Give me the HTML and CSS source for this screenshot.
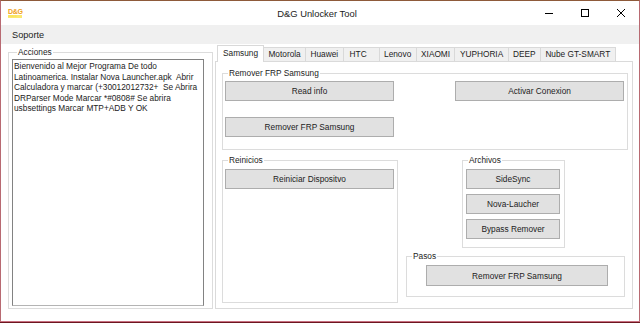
FILE: index.html
```html
<!DOCTYPE html>
<html>
<head>
<meta charset="utf-8" />
<title>D&amp;G Unlocker Tool</title>
<link rel="stylesheet" href="styles.css">
</head>
<body>
<div class="window">
	<div class="titlebar">
		<div class="app-icon"><span class="logo-top">D&amp;G</span><span class="logo-sub">unlock</span></div>
		<div class="title">D&amp;G Unlocker Tool</div>
		<div class="controls">
			<span class="ctl"><svg width="10" height="10" viewBox="0 0 10 10"><path d="M1 5.5H9" stroke="#000" stroke-width="1"/></svg></span>
			<span class="ctl"><svg width="10" height="10" viewBox="0 0 10 10"><rect x="1.5" y="1.5" width="7" height="7" fill="none" stroke="#000" stroke-width="1"/></svg></span>
			<span class="ctl"><svg width="10" height="10" viewBox="0 0 10 10"><path d="M1 1L9 9M9 1L1 9" stroke="#000" stroke-width="1"/></svg></span>
		</div>
	</div>
	<div class="menubar"><span class="menu-item">Soporte</span></div>
	<div class="client">
		<fieldset class="group acciones">
			<legend>Acciones</legend>
			<div class="textbox">Bienvenido al Mejor Programa De todo<br>Latinoamerica. Instalar Nova Launcher.apk&nbsp; Abrir<br>Calculadora y marcar (+30012012732+&nbsp; Se Abrira<br>DRParser Mode Marcar *#0808# Se abrira<br>usbsettings Marcar MTP+ADB Y OK</div>
		</fieldset>
		<div class="tabs">
			<div class="tabstrip">
				<span class="tab active">Samsung</span>
				<span class="tab">Motorola</span>
				<span class="tab">Huawei</span>
				<span class="tab tab-wide">HTC</span>
				<span class="tab">Lenovo</span>
				<span class="tab">XIAOMI</span>
				<span class="tab">YUPHORIA</span>
				<span class="tab">DEEP</span>
				<span class="tab">Nube GT-SMART</span>
			</div>
			<div class="tabpage">
				<fieldset class="group frp">
					<legend>Remover FRP Samsung</legend>
					<div class="frp-body">
						<div class="btn">Read info</div>
						<div class="btn">Activar Conexion</div>
						<div class="btn">Remover FRP Samsung</div>
					</div>
				</fieldset>
				<div class="lower">
					<fieldset class="group reinicios">
						<legend>Reinicios</legend>
						<div class="reinicios-body">
							<div class="btn">Reiniciar Dispositvo</div>
						</div>
					</fieldset>
					<div class="right-col">
						<fieldset class="group archivos">
							<legend>Archivos</legend>
							<div class="archivos-body">
								<div class="btn">SideSync</div>
								<div class="btn">Nova-Laucher</div>
								<div class="btn">Bypass Remover</div>
							</div>
						</fieldset>
						<fieldset class="group pasos">
							<legend>Pasos</legend>
							<div class="pasos-body">
								<div class="btn btn-pasos">Remover FRP Samsung</div>
							</div>
						</fieldset>
					</div>
				</div>
			</div>
		</div>
	</div>
</div>
</body>
</html>
```

FILE: styles.css
```css
body{ margin: 0; background: #6e1620; font-family: "Liberation Sans", Arial, sans-serif; color: #1c1c1c;}
.window{ width: 640px; height: 322px; box-sizing: border-box; background: #fff; border: 1px solid #b86a72; border-top-color: #8e5a3a; border-bottom-color: #c87080;}

/* barra de titulo */
.titlebar{ height: 24px; display: grid; grid-template-columns: 1fr auto 1fr; align-items: center;}
.app-icon{ display: flex; flex-direction: column; margin-left: 7px; width: 14px; line-height: 1;}
.logo-top{ font-size: 7px; font-weight: bold; color: #f0a020; letter-spacing: -0.3px;}
.logo-sub{ font-size: 3px; color: #f8e040; background: #fbe870; height: 3px; overflow: hidden;}
.title{ font-size: 9.4px; margin-right: 6px;}
.controls{ display: flex; justify-self: end; height: 24px;}
.ctl{ width: 36px; display: flex; align-items: center; justify-content: center;}

/* menu */
.menubar{ height: 19px; background: #f0f0f0; display: flex; align-items: center; padding-left: 11px;}
.menu-item{ font-size: 9.2px;}

.client{ display: flex; padding: 1px 0 0 7px;}

/* groupbox */
.group{ margin: 0; padding: 0; border: 1px solid #dcdcdc; min-width: 0; box-sizing: border-box;}
.group legend{ font-size: 8.3px; line-height: 10px; padding: 0 1px; margin-left: 5px;}

.acciones{ width: 205px; margin-top: 2px; padding: 2px 8px 1px 3px;}
.textbox{ width: 192px; height: 247px; box-sizing: border-box; border: 1px solid #828282; border-bottom-color: #b4b4b4; padding: 1px; font-size: 8.3px; line-height: 10.5px;}

/* tabs */
.tabs{ margin-left: 2px; width: 418px;}
.tabstrip{ display: flex; align-items: flex-end; height: 16px; padding-left: 2px;}
.tab{ height: 14px; box-sizing: border-box; border: 1px solid #d9d9d9; border-bottom: none; border-left: none; background: #f0f0f0; font-size: 8.3px; line-height: 13px; padding: 0 4.4px;}
.tab.active{ height: 17px; margin-bottom: -1px; background: #fff; border-left: 1px solid #d9d9d9; position: relative; z-index: 1; line-height: 15px; padding: 0 5px;}
.tab-wide{ padding-right: 12px; padding-left: 6px;}
.tabpage{ height: 248px; box-sizing: border-box; border: 1px solid #dadada; padding: 6px 0 0 6px;}

.btn{ height: 20px; box-sizing: border-box; background: #e1e1e1; border: 1px solid #adadad; font-size: 8.3px; display: flex; align-items: center; justify-content: center;}

.frp{ width: 406px;}
.frp-body{ display: grid; grid-template-columns: 169px 169px; justify-content: space-between; row-gap: 16px; padding: 3px 3px 12px 2px;}

.lower{ display: flex; gap: 8px; margin-top: 5px;}
.reinicios{ width: 176px;}
.reinicios-body{ padding: 4px 0 113px 2px;}
.reinicios-body .btn{ width: 169px;}

.right-col{ width: 219px;}
.archivos{ width: 103px; margin-left: 56px;}
.archivos-body{ display: flex; flex-direction: column; gap: 5px; padding: 4px 0 8px 3px;}
.archivos-body .btn{ width: 94px;}
.pasos{ width: 219px; margin-top: 3px;}
.pasos-body{ padding: 4px 0 10px 19px;}
.btn-pasos{ width: 182px; height: 21px;}
```
